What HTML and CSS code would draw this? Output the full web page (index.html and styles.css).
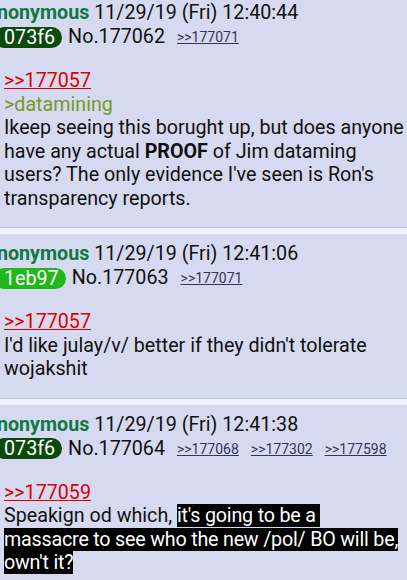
FILE: index.html
```html
<!DOCTYPE html>
<html>
<head>
<meta charset="utf-8">
<link rel="stylesheet" href="styles.css">
</head>
<body>
<div class="thread">
  <div class="post">
    <div class="head name-line"><span class="name">Anonymous</span> <span class="date">11/29/19 (Fri) 12:40:44</span></div>
    <div class="head id-line"><span class="id id-dark">073f6</span><span class="no">No.177062</span><a class="backlink">&gt;&gt;177071</a></div>
    <div class="body">
      <a class="quote">&gt;&gt;177057</a><br>
      <span class="green">&gt;datamining</span><br>
      Ikeep seeing this borught up, but does anyone have any actual <b>PROOF</b> of Jim dataming users? The only evidence I've seen is Ron's transparency reports.
    </div>
  </div>
  <div class="post">
    <div class="head name-line"><span class="name">Anonymous</span> <span class="date">11/29/19 (Fri) 12:41:06</span></div>
    <div class="head id-line"><span class="id id-bright">1eb97</span><span class="no">No.177063</span><a class="backlink">&gt;&gt;177071</a></div>
    <div class="body">
      <a class="quote">&gt;&gt;177057</a><br>
      I'd like julay/v/ better if they didn't tolerate wojakshit
    </div>
  </div>
  <div class="post">
    <div class="head name-line"><span class="name">Anonymous</span> <span class="date">11/29/19 (Fri) 12:41:38</span></div>
    <div class="head id-line"><span class="id id-dark">073f6</span><span class="no">No.177064</span><a class="backlink">&gt;&gt;177068</a><a class="backlink">&gt;&gt;177302</a><a class="backlink">&gt;&gt;177598</a></div>
    <div class="body">
      <a class="quote">&gt;&gt;177059</a><br>
      Speakign od which, <span class="spoiler">it's going to be a&nbsp;<br>massacre to see who the new /pol/ BO will be, own't it?</span>
    </div>
  </div>
</div>
</body>
</html>
```

FILE: styles.css
```css
html, body {
  margin: 0;
  padding: 0;
  overflow: hidden;
}
body {
  background: #eef2ff;
  font-family: Roboto, "Noto Sans", sans-serif;
  font-size: 19.7px;
  color: #111;
  width: 407px;
}
.thread {
  margin-top: -7px;
}
.post {
  background: #d6daf0;
  border-bottom: 1px solid #b7c5d9;
  padding: 9px 0 17px 4px;
  margin-bottom: 6px;
}
.head {
  line-height: 22px;
  white-space: nowrap;
}
.name-line {
  margin-left: -20px;
}
.name {
  color: #117743;
  font-weight: bold;
}
.id-line {
  margin-left: -10px;
  margin-top: 2px;
  display: flex;
  align-items: center;
}
.id {
  display: inline-block;
  color: #fff;
  border-radius: 11px;
  padding: 0 7px 0 10px;
  line-height: 21px;
  margin-right: 6px;
}
.id-dark {
  background: #0a4a0a;
}
.id-bright {
  background: #1fb81a;
}
.no {
  margin-right: 12px;
}
.backlink {
  font-size: 14px;
  color: #34345c;
  text-decoration: underline;
  margin-right: 12px;
}
.body {
  margin-top: 21px;
  line-height: 23.5px;
}
.quote {
  color: #dd0000;
  text-decoration: underline;
}
.green {
  color: #789922;
}
.spoiler {
  background: #000;
  color: #fff;
  letter-spacing: -0.2px;
}
```
